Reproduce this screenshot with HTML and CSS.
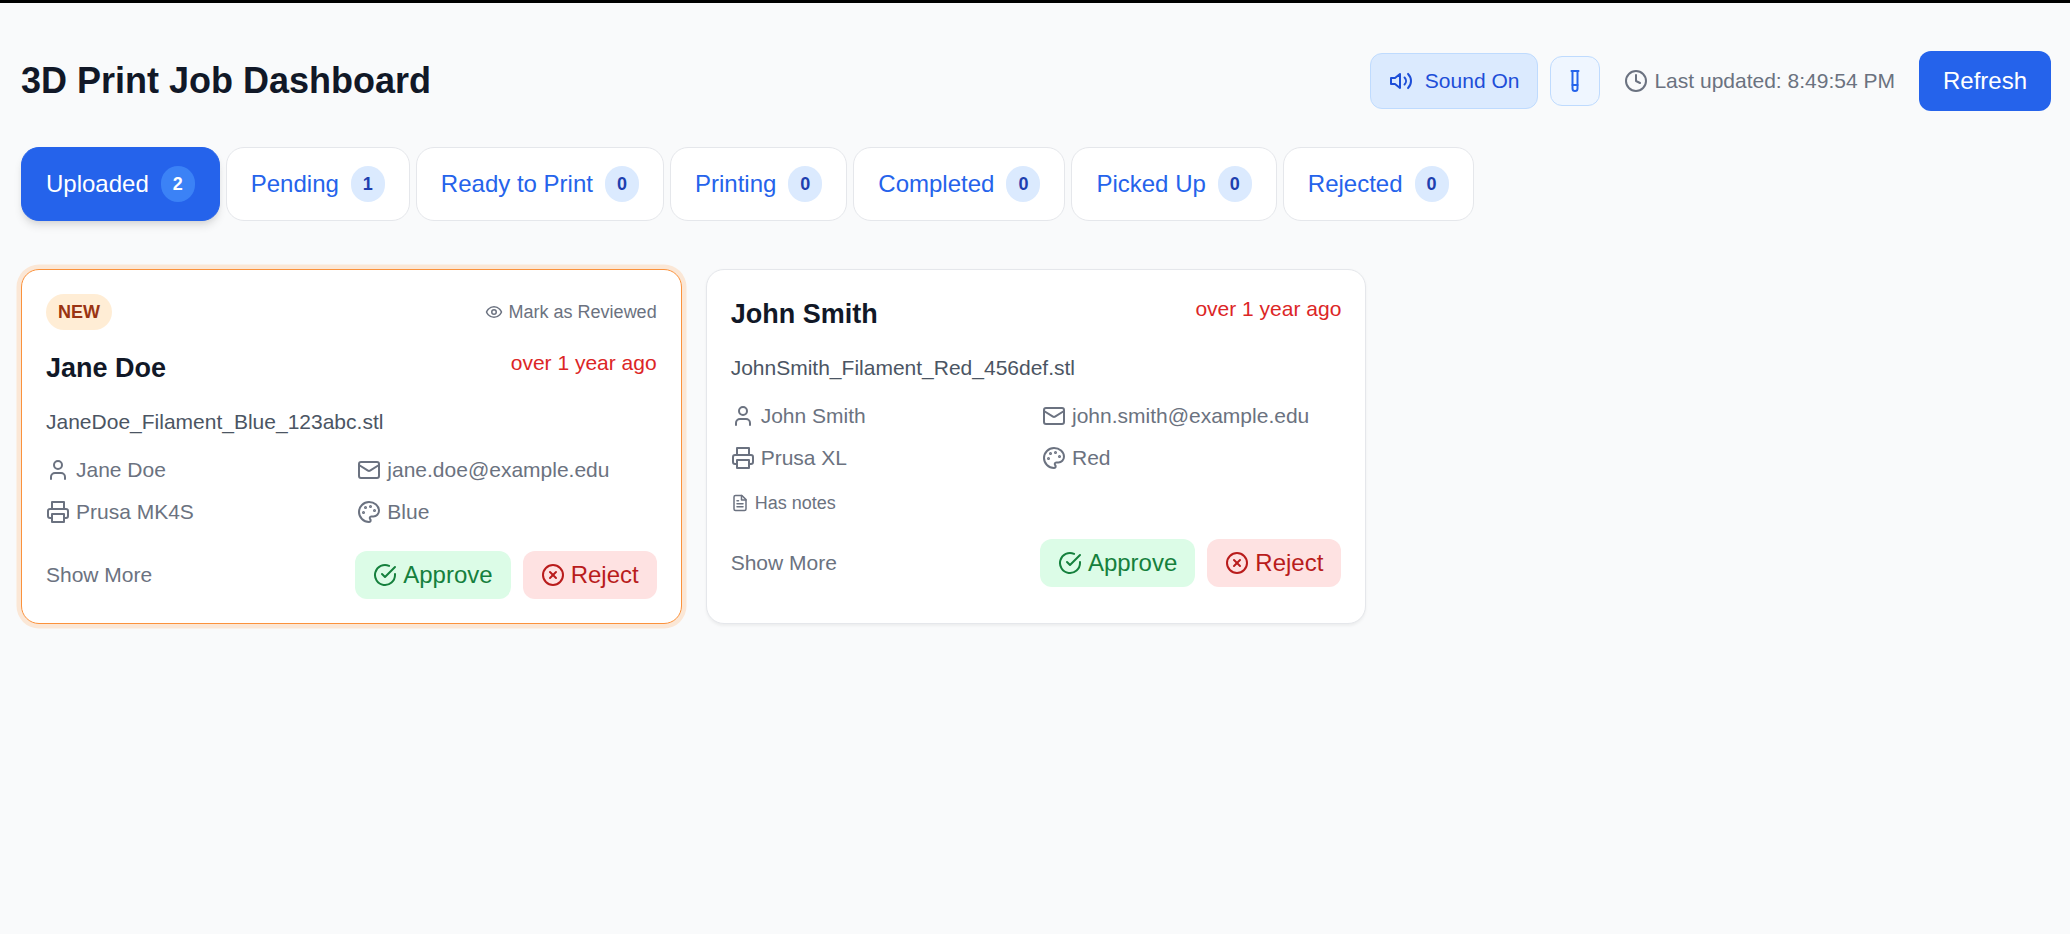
FILE: index.html

```html
<!DOCTYPE html>
<html lang="en">
<head>
  <meta charset="UTF-8" />
  <meta name="viewport" content="width=device-width, initial-scale=1.0"/>
  <title>3D Print Job Dashboard</title>
  <link rel="stylesheet" href="styles.css">
</head>
<body>
  <main class="page">
    <header class="topbar">
      <h1>3D Print Job Dashboard</h1>
      <div class="controls">
        <button class="sound-btn">
          <svg class="icon" viewBox="0 0 24 24"><polygon points="11 5 6 9 2 9 2 15 6 15 11 19 11 5"/><path d="M15.54 8.46a5 5 0 0 1 0 7.07"/><path d="M19.07 4.93a10 10 0 0 1 0 14.14"/></svg>
          Sound On
        </button>
        <button class="test-btn">
          <svg class="icon" viewBox="0 0 24 24"><path d="M14.5 2v17.5c0 1.4-1.1 2.5-2.5 2.5c-1.4 0-2.5-1.1-2.5-2.5V2"/><path d="M8.5 2h7"/><path d="M14.5 16h-5"/></svg>
        </button>
        <span class="updated">
          <svg class="icon" viewBox="0 0 24 24"><circle cx="12" cy="12" r="10"/><polyline points="12 6 12 12 16 14"/></svg>
          Last updated: 8:49:54 PM
        </span>
        <button class="refresh-btn">Refresh</button>
      </div>
    </header>

    <nav class="tabs">
      <a class="tab active">Uploaded <span class="count">2</span></a>
      <a class="tab">Pending <span class="count">1</span></a>
      <a class="tab">Ready to Print <span class="count">0</span></a>
      <a class="tab">Printing <span class="count">0</span></a>
      <a class="tab">Completed <span class="count">0</span></a>
      <a class="tab">Picked Up <span class="count">0</span></a>
      <a class="tab">Rejected <span class="count">0</span></a>
    </nav>

    <section class="jobs">
      <article class="card new">
        <div class="card-flag">
          <span class="new-badge">NEW</span>
          <span class="review">
            <svg class="icon-xs" viewBox="0 0 24 24"><path d="M2 12s3-7 10-7 10 7 10 7-3 7-10 7-10-7-10-7Z"/><circle cx="12" cy="12" r="3"/></svg>
            Mark as Reviewed
          </span>
        </div>
        <div class="card-head">
          <h2>Jane Doe</h2>
          <span class="age">over 1 year ago</span>
        </div>
        <p class="file">JaneDoe_Filament_Blue_123abc.stl</p>
        <div class="details">
          <span class="detail"><svg class="icon" viewBox="0 0 24 24"><path d="M19 21v-2a4 4 0 0 0-4-4H9a4 4 0 0 0-4 4v2"/><circle cx="12" cy="7" r="4"/></svg>Jane Doe</span>
          <span class="detail"><svg class="icon" viewBox="0 0 24 24"><rect width="20" height="16" x="2" y="4" rx="2"/><path d="m22 7-8.97 5.7a1.94 1.94 0 0 1-2.06 0L2 7"/></svg>jane.doe@example.edu</span>
          <span class="detail"><svg class="icon" viewBox="0 0 24 24"><polyline points="6 9 6 2 18 2 18 9"/><path d="M6 18H4a2 2 0 0 1-2-2v-5a2 2 0 0 1 2-2h16a2 2 0 0 1 2 2v5a2 2 0 0 1-2 2h-2"/><rect x="6" y="14" width="12" height="8"/></svg>Prusa MK4S</span>
          <span class="detail"><svg class="icon" viewBox="0 0 24 24"><circle class="dot" cx="13.5" cy="6.5" r=".5"/><circle class="dot" cx="17.5" cy="10.5" r=".5"/><circle class="dot" cx="8.5" cy="7.5" r=".5"/><circle class="dot" cx="6.5" cy="12.5" r=".5"/><path d="M12 2C6.5 2 2 6.5 2 12s4.5 10 10 10c.926 0 1.648-.746 1.648-1.688 0-.437-.18-.835-.437-1.125-.29-.289-.438-.652-.438-1.125a1.64 1.64 0 0 1 1.668-1.668h1.996c3.051 0 5.555-2.503 5.555-5.554C21.965 6.012 17.461 2 12 2z"/></svg>Blue</span>
        </div>
        <div class="card-foot">
          <a class="show-more">Show More</a>
          <div class="actions">
            <button class="approve"><svg class="icon" viewBox="0 0 24 24"><path d="M22 11.08V12a10 10 0 1 1-5.93-9.14"/><polyline points="22 4 12 14.01 9 11.01"/></svg>Approve</button>
            <button class="reject"><svg class="icon" viewBox="0 0 24 24"><circle cx="12" cy="12" r="10"/><path d="m15 9-6 6"/><path d="m9 9 6 6"/></svg>Reject</button>
          </div>
        </div>
      </article>

      <article class="card">
        <div class="card-head">
          <h2>John Smith</h2>
          <span class="age">over 1 year ago</span>
        </div>
        <p class="file">JohnSmith_Filament_Red_456def.stl</p>
        <div class="details">
          <span class="detail"><svg class="icon" viewBox="0 0 24 24"><path d="M19 21v-2a4 4 0 0 0-4-4H9a4 4 0 0 0-4 4v2"/><circle cx="12" cy="7" r="4"/></svg>John Smith</span>
          <span class="detail"><svg class="icon" viewBox="0 0 24 24"><rect width="20" height="16" x="2" y="4" rx="2"/><path d="m22 7-8.97 5.7a1.94 1.94 0 0 1-2.06 0L2 7"/></svg>john.smith@example.edu</span>
          <span class="detail"><svg class="icon" viewBox="0 0 24 24"><polyline points="6 9 6 2 18 2 18 9"/><path d="M6 18H4a2 2 0 0 1-2-2v-5a2 2 0 0 1 2-2h16a2 2 0 0 1 2 2v5a2 2 0 0 1-2 2h-2"/><rect x="6" y="14" width="12" height="8"/></svg>Prusa XL</span>
          <span class="detail"><svg class="icon" viewBox="0 0 24 24"><circle class="dot" cx="13.5" cy="6.5" r=".5"/><circle class="dot" cx="17.5" cy="10.5" r=".5"/><circle class="dot" cx="8.5" cy="7.5" r=".5"/><circle class="dot" cx="6.5" cy="12.5" r=".5"/><path d="M12 2C6.5 2 2 6.5 2 12s4.5 10 10 10c.926 0 1.648-.746 1.648-1.688 0-.437-.18-.835-.437-1.125-.29-.289-.438-.652-.438-1.125a1.64 1.64 0 0 1 1.668-1.668h1.996c3.051 0 5.555-2.503 5.555-5.554C21.965 6.012 17.461 2 12 2z"/></svg>Red</span>
        </div>
        <div class="notes">
          <svg class="icon-xs" viewBox="0 0 24 24"><path d="M14.5 2H6a2 2 0 0 0-2 2v16a2 2 0 0 0 2 2h12a2 2 0 0 0 2-2V7.5L14.5 2z"/><polyline points="14 2 14 8 20 8"/><line x1="16" y1="13" x2="8" y2="13"/><line x1="16" y1="17" x2="8" y2="17"/><line x1="10" y1="9" x2="8" y2="9"/></svg>
          Has notes
        </div>
        <div class="card-foot">
          <a class="show-more">Show More</a>
          <div class="actions">
            <button class="approve"><svg class="icon" viewBox="0 0 24 24"><path d="M22 11.08V12a10 10 0 1 1-5.93-9.14"/><polyline points="22 4 12 14.01 9 11.01"/></svg>Approve</button>
            <button class="reject"><svg class="icon" viewBox="0 0 24 24"><circle cx="12" cy="12" r="10"/><path d="m15 9-6 6"/><path d="m9 9 6 6"/></svg>Reject</button>
          </div>
        </div>
      </article>
    </section>
  </main>
</body>
</html>
```

FILE: styles.css

```css
* {
  box-sizing: border-box;
}
body {
  margin: 0;
  min-height: 100vh;
  background: #f9fafb;
  border-top: 3px solid #000;
  font-family: "Liberation Sans", Arial, sans-serif;
  font-size: 24px;
  line-height: 36px;
  color: #111827;
}
button {
  font-family: inherit;
  border: none;
  cursor: pointer;
}
svg {
  fill: none;
  stroke: currentColor;
  stroke-width: 2;
  stroke-linecap: round;
  stroke-linejoin: round;
  flex-shrink: 0;
}
.icon {
  width: 24px;
  height: 24px;
}
.icon-xs {
  width: 18px;
  height: 18px;
}
.dot {
  fill: currentColor;
}
.page {
  padding: 48px 19px 0 21px;
}
.topbar {
  display: flex;
  justify-content: space-between;
  align-items: center;
  margin-bottom: 36px;
}
h1 {
  margin: 0;
  font-size: 36px;
  line-height: 48px;
  font-weight: 700;
}
.controls {
  display: flex;
  align-items: center;
  gap: 12px;
}
.sound-btn {
  display: flex;
  align-items: center;
  gap: 12px;
  padding: 12px 18px;
  font-size: 21px;
  line-height: 30px;
  color: #1d4ed8;
  background: #dbeafe;
  border: 1px solid #bfdbfe;
  border-radius: 12px;
}
.test-btn {
  display: flex;
  padding: 12px;
  color: #2563eb;
  background: #eff6ff;
  border: 1px solid #bfdbfe;
  border-radius: 12px;
}
.updated {
  display: flex;
  align-items: center;
  gap: 6px;
  margin: 0 12px;
  font-size: 21px;
  line-height: 30px;
  color: #6b7280;
}
.refresh-btn {
  padding: 12px 24px;
  font-size: 24px;
  line-height: 36px;
  color: #fff;
  background: #2563eb;
  border-radius: 12px;
}
.tabs {
  display: flex;
  gap: 6px;
  margin-bottom: 48px;
}
.tab {
  display: flex;
  align-items: center;
  gap: 12px;
  padding: 18px 24px;
  color: #2563eb;
  background: #fff;
  border: 1px solid #e5e7eb;
  border-radius: 18px;
}
.tab.active {
  color: #fff;
  background: #2563eb;
  border-color: #2563eb;
  box-shadow: 0 6px 9px -1.5px rgba(0,0,0,0.1), 0 3px 6px -3px rgba(0,0,0,0.1);
}
.count {
  padding: 6px 12px;
  font-size: 18px;
  line-height: 24px;
  font-weight: 700;
  color: #1e40af;
  background: #dbeafe;
  border-radius: 999px;
}
.tab.active .count {
  color: #fff;
  background: #3b82f6;
}
.jobs {
  display: grid;
  grid-template-columns: repeat(3, 1fr);
  gap: 24px;
}
.card {
  padding: 24px;
  background: #fff;
  border: 1px solid #e5e7eb;
  border-radius: 18px;
  box-shadow: 0 1.5px 3px rgba(0,0,0,0.05);
}
.card.new {
  border-color: #fb923c;
  box-shadow: 0 0 0 4.5px #fbe7d6;
}
.card-flag {
  display: flex;
  justify-content: space-between;
  align-items: center;
  margin-bottom: 18px;
}
.new-badge {
  padding: 6px 12px;
  font-size: 18px;
  line-height: 24px;
  font-weight: 700;
  color: #9a3412;
  background: #ffedd5;
  border-radius: 999px;
}
.review {
  display: flex;
  align-items: center;
  gap: 6px;
  font-size: 18px;
  line-height: 24px;
  color: #6b7280;
}
.card-head {
  display: flex;
  justify-content: space-between;
  align-items: flex-start;
}
h2 {
  margin: 0;
  font-size: 27px;
  line-height: 40.5px;
  font-weight: 700;
}
.age {
  font-size: 21px;
  line-height: 30px;
  color: #dc2626;
}
.file {
  margin: 18px 0;
  font-size: 21px;
  line-height: 30px;
  color: #4b5563;
}
.details {
  display: grid;
  grid-template-columns: 1fr 1fr;
  gap: 12px;
}
.detail {
  display: flex;
  align-items: center;
  gap: 6px;
  font-size: 21px;
  line-height: 30px;
  color: #6b7280;
}
.notes {
  display: flex;
  align-items: center;
  gap: 6px;
  margin-top: 18px;
  font-size: 18px;
  line-height: 24px;
  color: #6b7280;
}
.card-foot {
  display: flex;
  justify-content: space-between;
  align-items: center;
  margin-top: 24px;
}
.show-more {
  font-size: 21px;
  line-height: 30px;
  color: #6b7280;
}
.actions {
  display: flex;
  gap: 12px;
}
.approve, .reject {
  display: flex;
  align-items: center;
  gap: 6px;
  padding: 6px 18px;
  font-size: 24px;
  line-height: 36px;
  border-radius: 12px;
}
.approve {
  color: #15803d;
  background: #dcfce7;
}
.reject {
  color: #b91c1c;
  background: #fee2e2;
}
```
